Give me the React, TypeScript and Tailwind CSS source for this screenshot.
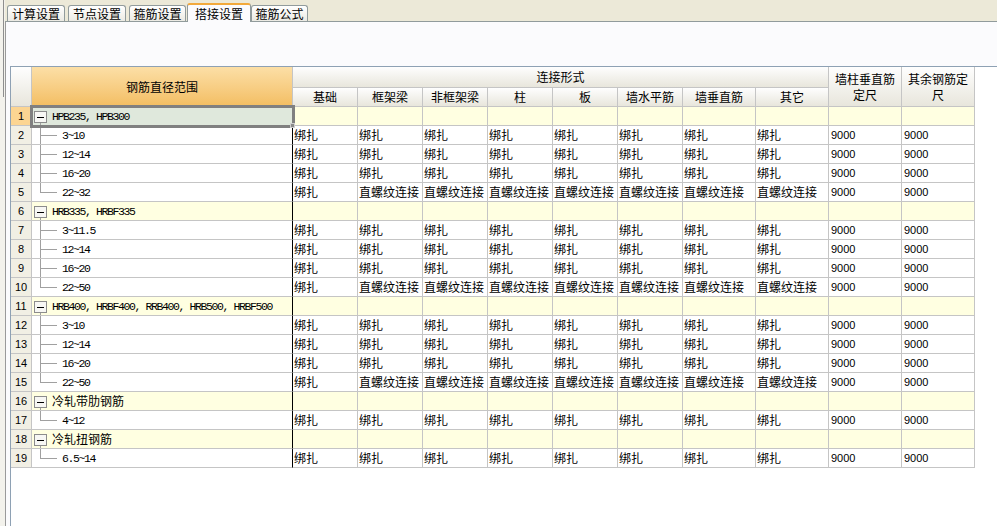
import React from "react";

type GroupRow = { kind: "group"; label: string; cjk?: boolean };
type ChildRow = { kind: "child"; label: string; last?: boolean; vals: string[] };
type Row = GroupRow | ChildRow;

const B = "绑扎";
const Z = "直螺纹连接";
const allB = [B, B, B, B, B, B, B, B];
const mixed = [B, Z, Z, Z, Z, Z, Z, Z];

const rows: Row[] = [
  { kind: "group", label: "HPB235, HPB300" },
  { kind: "child", label: "3~10", vals: allB },
  { kind: "child", label: "12~14", vals: allB },
  { kind: "child", label: "16~20", vals: allB },
  { kind: "child", label: "22~32", vals: mixed, last: true },
  { kind: "group", label: "HRB335, HRBF335" },
  { kind: "child", label: "3~11.5", vals: allB },
  { kind: "child", label: "12~14", vals: allB },
  { kind: "child", label: "16~20", vals: allB },
  { kind: "child", label: "22~50", vals: mixed, last: true },
  { kind: "group", label: "HRB400, HRBF400, RRB400, HRB500, HRBF500" },
  { kind: "child", label: "3~10", vals: allB },
  { kind: "child", label: "12~14", vals: allB },
  { kind: "child", label: "16~20", vals: allB },
  { kind: "child", label: "22~50", vals: mixed, last: true },
  { kind: "group", label: "冷轧带肋钢筋", cjk: true },
  { kind: "child", label: "4~12", vals: allB, last: true },
  { kind: "group", label: "冷轧扭钢筋", cjk: true },
  { kind: "child", label: "6.5~14", vals: allB, last: true },
];

const subCols = ["基础", "框架梁", "非框架梁", "柱", "板", "墙水平筋", "墙垂直筋", "其它"];

const CJK = "font-['Noto_Sans_CJK_SC',sans-serif]";
const MONO = "font-['Liberation_Mono',monospace] text-[11.5px] tracking-[-1.4px] mt-[2px]";
const SANS = "font-['Liberation_Sans',sans-serif] text-[11px]";
const CELL = "border-r border-b border-[#c5c5c5]";
const HDR = "bg-linear-to-b from-[#fefefe] to-[#e8e6dc]";

function GroupGlyph() {
  return (
    <svg width="20" height="18" className="shrink-0">
      <line x1="8.5" y1="15" x2="8.5" y2="18" stroke="#a0a0a0" />
      <rect x="2.5" y="4.5" width="12" height="11" fill="#f7f7f4" stroke="#8c8c8c" />
      <line x1="5" y1="10.5" x2="12" y2="10.5" stroke="#000" />
    </svg>
  );
}

function ChildGlyph({ last }: { last?: boolean }) {
  return (
    <svg width="25" height="18" className="shrink-0">
      <line x1="8.5" y1="0" x2="8.5" y2={last ? 10 : 18} stroke="#a0a0a0" />
      <line x1="8" y1="9.5" x2="25" y2="9.5" stroke="#a0a0a0" />
    </svg>
  );
}

function Tab({ label, active, className }: { label: string; active?: boolean; className?: string }) {
  if (active) {
    return (
      <div
        className={`relative z-10 h-[19px] -mb-[1px] w-[64px] rounded-t-[3px] border-x border-[#919b9c] border-t-2 border-t-[#f2a93b] bg-[#fbfbfd] flex items-center justify-center text-[12px] leading-[14px] text-black ${CJK} ${className ?? ""}`}
      >
        {label}
      </div>
    );
  }
  return (
    <div
      className={`h-[16px] rounded-t-[3px] border border-b-0 border-[#919b9c] bg-linear-to-b from-[#ffffff] to-[#ebeae3] flex items-center justify-center pt-[1px] text-[12px] leading-[14px] text-black ${CJK} ${className ?? ""}`}
    >
      {label}
    </div>
  );
}

export default function App() {
  return (
    <div className="w-[997px] h-[526px] flex overflow-hidden bg-[#ece9d8] text-black">
      <div className="w-[5px] shrink-0 bg-[#f3f2ec] flex flex-col">
        <div className="h-[97px] w-[4px] border-r border-[#8e8e8e]" />
      </div>
      <div className="flex-1 flex flex-col min-w-0">
        <div className="h-[22px] shrink-0 border-b border-[#919b9c] flex items-end pl-[2px] bg-[#ece9d8]">
          <Tab label="计算设置" className="w-[58px]" />
          <Tab label="节点设置" className="w-[58px] ml-[3px]" />
          <Tab label="箍筋设置" className="w-[57px] ml-[3px]" />
          <Tab label="搭接设置" active className="ml-[1px]" />
          <Tab label="箍筋公式" className="w-[57px]" />
        </div>
        <div className="flex-1 flex flex-col bg-[#fbfbfd] border-l border-[#9a9a9a] pt-[44px] pl-[4px]">
          <div className="flex-1 bg-white border-t border-l border-[#8ea1b4]">
            <div className="grid w-max grid-cols-[21px_261px_repeat(6,65px)_repeat(4,73px)] grid-rows-[21px_19px] auto-rows-[19px]">
              {/* header */}
              <div className={`row-span-2 ${CELL} ${HDR}`} />
              <div
                className={`row-span-2 ${CELL} bg-linear-to-b from-[#fcdfa6] to-[#f3be62] flex items-center justify-center text-[12px] ${CJK}`}
              >
                钢筋直径范围
              </div>
              <div className={`col-span-8 ${CELL} ${HDR} flex items-center justify-center text-[12px] ${CJK}`}>
                连接形式
              </div>
              <div
                className={`row-span-2 ${CELL} ${HDR} flex items-center justify-center text-center text-[12px] leading-[16px] ${CJK}`}
              >
                墙柱垂直筋
                <br />
                定尺
              </div>
              <div
                className={`row-span-2 ${CELL} ${HDR} flex items-center justify-center text-center text-[12px] leading-[16px] ${CJK}`}
              >
                其余钢筋定
                <br />
                尺
              </div>
              {subCols.map((c) => (
                <div key={c} className={`${CELL} ${HDR} flex items-center justify-center text-[12px] ${CJK}`}>
                  {c}
                </div>
              ))}

              {/* rows */}
              {rows.map((r, i) => {
                const n = i + 1;
                const selected = i === 0;
                const isGroup = r.kind === "group";
                const numCell = (
                  <div
                    key={`n${n}`}
                    className={`${CELL} ${selected ? "bg-[#fcd592]" : "bg-[#f1efe4]"} flex items-center justify-center ${SANS}`}
                  >
                    {n}
                  </div>
                );
                const treeBg = selected ? "bg-[#dfe8dc]" : isGroup ? "bg-[#ffffe1]" : "bg-white";
                const treeCell = (
                  <div
                    key={`t${n}`}
                    className={`border-r border-b border-b-[#c5c5c5] border-r-black ${treeBg} flex items-center whitespace-nowrap ${
                      selected ? "relative z-10 outline-3 outline-[#808080] -outline-offset-1" : ""
                    }`}
                  >
                    {isGroup ? <GroupGlyph /> : <ChildGlyph last={(r as ChildRow).last} />}
                    <span
                      className={`${isGroup ? "" : "ml-[5px]"} ${
                        isGroup && (r as GroupRow).cjk ? `text-[12px] ${CJK}` : MONO
                      }`}
                    >
                      {r.label}
                    </span>
                    {selected && (
                      <div className="absolute -right-[3px] -bottom-[3px] w-[5px] h-[5px] bg-[#8a8a8a] border border-[#d0d0d0]" />
                    )}
                  </div>
                );
                if (isGroup) {
                  return (
                    <React.Fragment key={n}>
                      {numCell}
                      {treeCell}
                      {Array.from({ length: 10 }).map((_, k) => (
                        <div key={k} className={`${CELL} bg-[#ffffe1]`} />
                      ))}
                    </React.Fragment>
                  );
                }
                const c = r as ChildRow;
                return (
                  <React.Fragment key={n}>
                    {numCell}
                    {treeCell}
                    {c.vals.map((v, k) => (
                      <div
                        key={k}
                        className={`${CELL} bg-white flex items-center pl-[1px] text-[12px] whitespace-nowrap overflow-hidden ${CJK}`}
                      >
                        {v}
                      </div>
                    ))}
                    <div className={`${CELL} bg-white flex items-center pl-[2px] ${SANS}`}>9000</div>
                    <div className={`${CELL} bg-white flex items-center pl-[2px] ${SANS}`}>9000</div>
                  </React.Fragment>
                );
              })}
            </div>
          </div>
        </div>
      </div>
    </div>
  );
}
